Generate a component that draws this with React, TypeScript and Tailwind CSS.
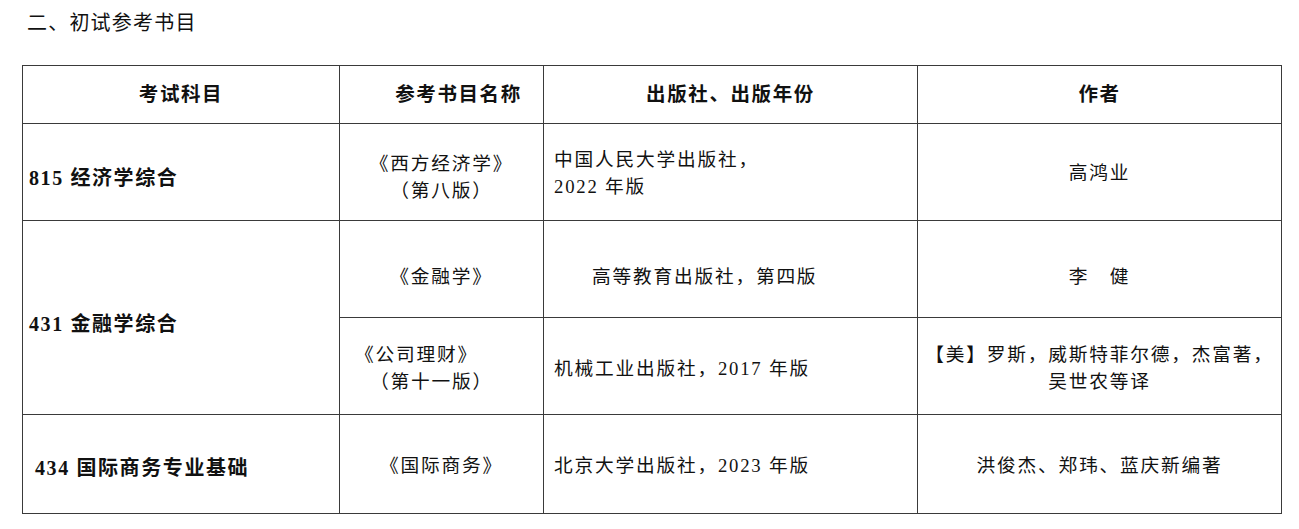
const font = {
  fontFamily: '"Liberation Serif", "Noto Sans CJK SC", serif',
};

const cell = "border border-[#3a3a3a] align-middle p-0";

export default function App() {
  return (
    <div className="min-h-[529px] w-[1299px] bg-white text-[#111]" style={font}>
      <h2 className="pl-[27px] pt-[10px] text-[20px] leading-[26px] tracking-[1.2px] font-normal">
        二、初试参考书目
      </h2>

      <table className="ml-[22px] mt-[29px] border-collapse text-[18.7px] tracking-[1.8px]">
        <colgroup>
          <col className="w-[317px]" />
          <col className="w-[204px]" />
          <col className="w-[374px]" />
          <col className="w-[364px]" />
        </colgroup>
        <thead>
          <tr className="h-[58px] text-[19.5px] tracking-[1.6px]">
            <th className={`${cell} text-center font-bold`}>考试科目</th>
            <th className={`${cell} pl-[34px] text-center font-bold`}>参考书目名称</th>
            <th className={`${cell} text-center font-bold`}>出版社、出版年份</th>
            <th className={`${cell} text-center font-bold`}>作者</th>
          </tr>
        </thead>
        <tbody className="leading-[27px]">
          <tr className="h-[97px]">
            <td className={`${cell} pl-[6px] pt-[13px] text-[20px] tracking-[1.6px] font-bold`}>
              815 经济学综合
            </td>
            <td className={`${cell} pt-[10px] text-center`}>
              《西方经济学》
              <br />
              （第八版）
            </td>
            <td className={`${cell} pl-[10px] pt-[1px]`}>
              中国人民大学出版社，
              <br />
              2022 年版
            </td>
            <td className={`${cell} pt-[1px] text-center`}>高鸿业</td>
          </tr>
          <tr className="h-[97px]">
            <td
              rowSpan={2}
              className={`${cell} pl-[6px] pt-[14px] text-[20px] tracking-[1.6px] font-bold`}
            >
              431 金融学综合
            </td>
            <td className={`${cell} pt-[15px] text-center`}>《金融学》</td>
            <td className={`${cell} pl-[48px] pt-[15px]`}>高等教育出版社，第四版</td>
            <td className={`${cell} pt-[15px] text-center`}>李　健</td>
          </tr>
          <tr className="h-[97px]">
            <td className={`${cell} pl-[15px] pt-[4px]`}>
              <div>《公司理财》</div>
              <div className="pl-[15px]">（第十一版）</div>
            </td>
            <td className={`${cell} pl-[10px] pt-[4px]`}>机械工业出版社，2017 年版</td>
            <td className={`${cell} pt-[4px] text-center`}>
              【美】罗斯，威斯特菲尔德，杰富著，
              <br />
              吴世农等译
            </td>
          </tr>
          <tr className="h-[99px]">
            <td className={`${cell} pl-[12px] pt-[9px] text-[20px] tracking-[1.6px] font-bold`}>
              434 国际商务专业基础
            </td>
            <td className={`${cell} pt-[3px] text-center`}>《国际商务》</td>
            <td className={`${cell} pl-[10px] pt-[3px]`}>北京大学出版社，2023 年版</td>
            <td className={`${cell} pt-[3px] text-center`}>洪俊杰、郑玮、蓝庆新编著</td>
          </tr>
        </tbody>
      </table>
    </div>
  );
}
